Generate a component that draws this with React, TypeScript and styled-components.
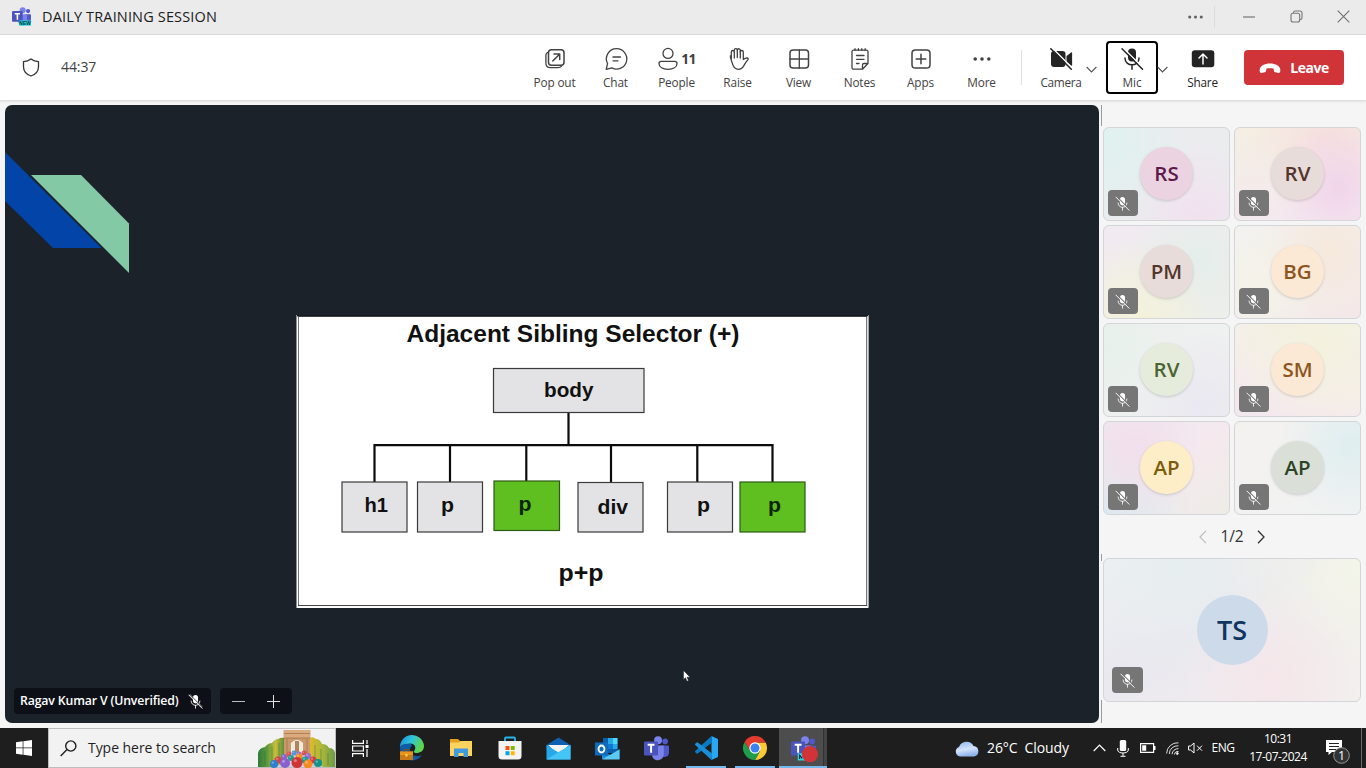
import React from 'react';
import styled, { createGlobalStyle } from 'styled-components';

const GlobalStyle = createGlobalStyle`
  * { box-sizing: border-box; }
  html, body { margin: 0; padding: 0; overflow: hidden; }
  body { font-family: "Open Sans", "Noto Sans", sans-serif; color: #242424; }
  svg { display: block; flex: none; overflow: visible; }
`;

const Window = styled.div`
  width: 1366px;
  height: 768px;
  display: flex;
  flex-direction: column;
  background: #f5f5f5;
`;

/* ---------- shared text ---------- */
const Label = styled.span<{ $size: number; $track?: number; $weight?: number; $color?: string }>`
  font-size: ${p => p.$size}px;
  letter-spacing: ${p => p.$track ?? 0}px;
  font-weight: ${p => p.$weight ?? 400};
  color: ${p => p.$color ?? 'inherit'};
  line-height: 1.2;
  white-space: pre;
`;

/* ---------- title bar ---------- */
const TitleBar = styled.header`
  height: 35px;
  flex: none;
  display: flex;
  align-items: center;
  padding: 0 0 1px 12px;
  background: #ebebeb;
  border-bottom: 1px solid #d9d9d9;
`;
const TitleText = styled(Label)`
  margin-left: 11px;
  flex: 1;
`;
const TitleDivider = styled.div`
  width: 1px;
  height: 22px;
  margin-right: 10px;
  background: #dcdcdc;
`;
const WindowControl = styled.div<{ $w: number }>`
  width: ${p => p.$w}px;
  display: flex;
  justify-content: center;
  color: #616161;
`;

/* ---------- meeting toolbar ---------- */
const Toolbar = styled.nav`
  height: 66px;
  flex: none;
  display: flex;
  align-items: center;
  padding: 0 22px 0 22px;
  background: #fff;
  border-bottom: 1px solid #dedede;
  box-shadow: 0 1px 2px rgba(0, 0, 0, 0.08);
  position: relative;
`;
const Timer = styled(Label)`
  margin-left: 21px;
  flex: 1;
`;
const Tool = styled.div<{ $w?: number; $focused?: boolean; $ml?: number }>`
  width: ${p => p.$w ?? 61}px;
  height: 53px;
  margin-left: ${p => p.$ml ?? 0}px;
  padding-top: ${p => (p.$focused ? 4 : 6)}px;
  display: flex;
  flex-direction: column;
  align-items: center;
  gap: 4px;
  border: ${p => (p.$focused ? '2px solid #000' : '0')};
  border-radius: 4px;
  color: #424242;
`;
const ToolIcon = styled.div`
  height: 24px;
  display: flex;
  align-items: center;
  gap: 2px;
`;
const ToolDivider = styled.div`
  width: 1px;
  height: 35px;
  margin-left: 9px;
  background: #e0e0e0;
`;
const Chevron = styled.div<{ $ml: number }>`
  width: 11px;
  margin-left: ${p => p.$ml}px;
  padding-top: 4px;
`;
const LeaveButton = styled.div`
  width: 100px;
  height: 35px;
  margin-left: 15px;
  padding-top: 1px;
  display: flex;
  align-items: center;
  justify-content: center;
  gap: 9px;
  border-radius: 4px;
  background: #d13438;
`;

/* ---------- meeting body ---------- */
const Body = styled.main`
  flex: 1;
  min-height: 0;
  display: flex;
  padding: 4px 5px 5px 5px;
`;
const Stage = styled.section`
  width: 1094px;
  height: 618px;
  position: relative;
  border-radius: 7px;
  overflow: hidden;
  background: #1b222a;
`;
const StageControls = styled.div`
  position: absolute;
  left: 9px;
  bottom: 9px;
  display: flex;
  gap: 9px;
`;
const StagePill = styled.div<{ $w: number }>`
  width: ${p => p.$w}px;
  height: 26px;
  display: flex;
  align-items: center;
  justify-content: space-between;
  border-radius: 4px;
  background: #0d1117;
  color: #fff;
  padding: 0 ${p => (p.$w > 100 ? '8px 0 6px' : '12px')};
`;
const Cursor = styled.div`
  position: absolute;
  left: 678px;
  top: 565px;
`;

/* ---------- participants ---------- */
const Side = styled.aside`
  width: 260px;
  margin-left: 2px;
  padding: 22px 0 0 2px;
  background:
    linear-gradient(#9b9b9b, #9b9b9b) 0 0 / 1px 21px no-repeat,
    linear-gradient(#9b9b9b, #9b9b9b) 0 449px / 1px 7px no-repeat,
    linear-gradient(#9b9b9b, #9b9b9b) 0 595px / 1px 25px no-repeat;
`;
const Grid = styled.div`
  display: grid;
  grid-template-columns: 127px 127px;
  grid-auto-rows: 94px;
  gap: 4px;
`;
const Tile = styled.div<{ $bg: string; $big?: boolean }>`
  height: ${p => (p.$big ? '144px' : 'auto')};
  position: relative;
  display: flex;
  align-items: center;
  justify-content: center;
  padding-bottom: 1px;
  border: 1px solid #d3d5d8;
  border-radius: 6px;
  background: ${p => p.$bg};
`;
const Avatar = styled.div<{ $bg: string; $fg: string; $big?: boolean }>`
  width: ${p => (p.$big ? 71 : 53)}px;
  height: ${p => (p.$big ? 70 : 53)}px;
  padding-bottom: 1px;
  display: flex;
  align-items: center;
  justify-content: center;
  border-radius: 50%;
  background: ${p => p.$bg};
  color: ${p => p.$fg};
  font-size: ${p => (p.$big ? 27 : 20.5)}px;
  font-weight: 600;
  box-shadow: ${p => (p.$big ? 'none' : '0 1px 3px rgba(0,0,0,0.16)')};
`;
const MuteBadge = styled.div<{ $big?: boolean }>`
  position: absolute;
  left: ${p => (p.$big ? 8 : 4)}px;
  bottom: ${p => (p.$big ? 8 : 4)}px;
  width: ${p => (p.$big ? 31 : 30)}px;
  height: 26px;
  display: flex;
  align-items: center;
  justify-content: center;
  padding-right: 1px;
  border-radius: 4px;
  background: #777676;
  color: #fff;
`;
const Pager = styled.div`
  height: 43px;
  display: flex;
  align-items: center;
  justify-content: center;
  gap: 14px;
`;

/* ---------- taskbar ---------- */
const Taskbar = styled.footer`
  height: 40px;
  flex: none;
  display: flex;
  background: #1e1e1e;
  color: #fff;
`;
const StartButton = styled.div`
  width: 48px;
  display: flex;
  align-items: center;
  justify-content: center;
`;
const SearchBox = styled.div`
  width: 288px;
  display: flex;
  align-items: center;
  border: 1px solid #bdbdbd;
  background: #f2f2f2;
  color: #1f1f1f;
  padding-left: 11px;
`;
const SearchText = styled(Label)`
  margin-left: 11px;
  padding-top: 1px;
  flex: 1;
`;
const TaskItem = styled.div<{ $active?: boolean; $open?: boolean }>`
  width: ${p => (p.$active ? 48 : 49)}px;
  display: flex;
  align-items: center;
  justify-content: center;
  background:
    linear-gradient(#76b9ed, #76b9ed) center bottom / ${p => (p.$active ? '48px 2px' : p.$open ? '40px 2px' : '0 0')} no-repeat
    ${p => (p.$active ? ', linear-gradient(90deg, #4d4d4d 44px, #323232 44px, #323232 45px, #444 45px)' : '')};
`;
const PinnedApps = styled.div`
  display: flex;
  margin-left: 2px;
`;
const Tray = styled.div`
  margin-left: auto;
  display: flex;
  align-items: center;
`;
const TrayItem = styled.div<{ $w: number }>`
  width: ${p => p.$w}px;
  display: flex;
  align-items: center;
  justify-content: center;
`;
const Notifications = styled(TrayItem)`
  padding: 6px 3px 0 0;
`;
const Clock = styled.div`
  width: 76px;
  display: flex;
  flex-direction: column;
  align-items: center;
  gap: 3px;
`;
const Weather = styled.div`
  width: 133px;
  display: flex;
  align-items: center;
  gap: 8px;
`;
const DesktopEdge = styled.div`
  width: 5px;
  height: 40px;
  border-left: 1px solid #6a6a6a;
`;

/* ---------- icons ---------- */
const stroke = { fill: 'none', stroke: 'currentColor', strokeWidth: 1.3, strokeLinecap: 'round', strokeLinejoin: 'round' } as const;

const TeamsMark = ({ size, badge }: { size: number; badge?: 'new' | 'dot' }) => (
  <svg width={size} height={size} viewBox="0 0 24 24">
    <circle cx="20.3" cy="5.2" r="2.7" fill="#5059c9" />
    <path d="M16 9h7a1 1 0 0 1 1 1v6a4.3 4.3 0 0 1-8 2z" fill="#5059c9" />
    <circle cx="13.5" cy="4.1" r="3.8" fill="#7b83eb" />
    <path d="M8 9h11v8.500a5.800 5.800 0 0 1-11 2.500z" fill="#7b83eb" />
    <rect x="0" y="5.200" width="13.500" height="13.500" rx="1.300" fill="#4b53bc" />
    <path d="M3.500 8.500h6.600M6.800 8.500v7.500" stroke="#fff" strokeWidth="1.900" fill="none" />
    {badge === 'new' && (
      <g>
        <rect x="9" y="17" width="15" height="6.500" fill="#21d3dc" />
        <text x="16.500" y="22.500" textAnchor="middle" fontFamily="Liberation Sans" fontWeight="700" fontSize="6.200" fill="#053b3f">NEW</text>
      </g>
    )}
    {badge === 'dot' && (
      <g>
        <path d="M6.500 16.500h7v7h-7z" fill="#25d7e0" />
        <path d="M8.300 22v-3.500l2.500 3" stroke="#113" fill="none" />
        <circle cx="18.200" cy="17.500" r="7.800" fill="#d13438" />
      </g>
    )}
  </svg>
);

const MicOff = ({ size }: { size: number }) => (
  <svg width={size} height={size} viewBox="0 0 16 16">
    <rect x="5.300" y="1" width="5.400" height="9" rx="2.700" fill="currentColor" />
    <path d="M3.300 7.500c0 6.200 9.400 6.200 9.400 0M8 12.200v2.900" fill="none" stroke="currentColor" strokeWidth="0.900" strokeLinecap="round" />
    <path d="M1.800 0.500l13.500 13.500" stroke="#777676" strokeWidth="1.100" />
    <path d="M1 1.200l14 14" stroke="currentColor" strokeWidth="1" strokeLinecap="round" />
  </svg>
);

const ToolMicOff = () => (
  <svg width="24" height="24" viewBox="0 0 24 24" color="#242424">
    <rect x="8" y="1.500" width="8" height="13" rx="4" fill="currentColor" />
    <path d="M5 11c0 9 14 9 14 0M12 17.800v4.400" {...stroke} strokeWidth="1.500" />
    <path d="M3 0.800l21 21" stroke="#fff" strokeWidth="1.500" />
    <path d="M2 1.800l20.500 20.500" stroke="currentColor" strokeWidth="1.500" strokeLinecap="round" />
  </svg>
);

const CameraOff = () => (
  <svg width="24" height="24" viewBox="0 0 24 24" color="#242424">
    <rect x="2" y="4" width="14.500" height="16" rx="3" fill="currentColor" />
    <path d="M17.500 9l4.600-3.500a.7.7 0 0 1 1 .6v11.800a.7.7 0 0 1-1 .6l-4.600-3.500z" fill="currentColor" />
    <path d="M3 0.800l21 21" stroke="#fff" strokeWidth="1.500" />
    <path d="M1.800 1.800l20.500 20.500" stroke="currentColor" strokeWidth="1.500" strokeLinecap="round" />
  </svg>
);

const PopOutIcon = () => (
  <svg width="24" height="24" viewBox="0 0 24 24" {...stroke}>
    <rect x="5.500" y="2.800" width="15.500" height="15.500" rx="3" strokeWidth="1.500" />
    <path d="M4.500 5.500C3 6.200 2.900 7 2.900 8.500v7.500c0 3 1.800 4.600 4.500 4.600h7.600c1.800 0 2.800-.5 3.600-1.500" />
    <path d="M9.800 14L16.500 7.200M11 7h5.700v5.600" strokeWidth="1.500" />
  </svg>
);
const ChatIcon = () => (
  <svg width="24" height="24" viewBox="0 0 24 24" {...stroke}>
    <path d="M12.500 1.700a10.200 10.200 0 1 1-4.700 19.200L2.200 22.300l1.400-5.600A10.200 10.200 0 0 1 12.500 1.700z" />
    <path d="M9 10h7.500M9 13.800h5" />
  </svg>
);
const PeopleIcon = () => (
  <svg width="22" height="24" viewBox="0 0 22 24" {...stroke}>
    <circle cx="11" cy="6.400" r="5" />
    <path d="M4.200 14.300h13.600a2.200 2.200 0 0 1 2.200 2.200c0 3.700-3.800 5.800-9 5.800s-9-2.100-9-5.800a2.200 2.200 0 0 1 2.200-2.200z" />
  </svg>
);
const RaiseIcon = () => (
  <svg width="24" height="24" viewBox="0 0 24 24" {...stroke}>
    <path d="M6 12.800V5.200a1.500 1.500 0 0 1 3 0a1.500 1.500 0 0 1 0-1.600 1.500 1.500 0 0 1 3-.4 1.500 1.500 0 0 1 3 .6v1.400a1.500 1.500 0 0 1 3 0v7.500c1.400-1 2.200-1.500 3.600-1.500 1.300 0 1.700 1 .9 1.900-2 1.700-2.600 3.600-3.900 5.700-1.400 2.500-3 3.700-5.400 3.700-3.600 0-5.300-2-6.200-6.100C6.500 14.500 5 12 5 9" transform="translate(-.7 -.2)" />
    <path d="M8.300 5v6M11.300 3v7.500M14.300 4.500v6.500" />
  </svg>
);
const ViewIcon = () => (
  <svg width="24" height="24" viewBox="0 0 24 24" {...stroke}>
    <rect x="3" y="3" width="18.500" height="18" rx="3" strokeWidth="1.500" />
    <path d="M12.300 3v18M3 12h18.500" />
  </svg>
);
const NotesIcon = () => (
  <svg width="24" height="24" viewBox="0 0 24 24" {...stroke}>
    <path d="M5.500 3.200h13a1.500 1.500 0 0 1 1.500 1.500v11.800l-5.500 5.700h-9A1.500 1.500 0 0 1 4 20.700v-16A1.500 1.500 0 0 1 5.500 3.200zM14.500 22v-4a1.500 1.500 0 0 1 1.500-1.500h4" />
    <path d="M7 1.700v1.500M10.400 1.700v1.500M13.800 1.700v1.500M17.100 1.700v1.500M8.500 8.500H16M8.500 12.300H16M8.500 16.500h2.500" />
  </svg>
);
const AppsIcon = () => (
  <svg width="24" height="24" viewBox="0 0 24 24" {...stroke}>
    <rect x="3" y="3" width="18" height="18" rx="3.300" strokeWidth="1.500" />
    <path d="M12 7.200v9.600M7.200 12h9.600" strokeWidth="1.500" />
  </svg>
);
const Dots = ({ w }: { w: number }) => (
  <svg width={w} height="6" viewBox="0 0 20 6" fill="currentColor">
    <circle cx="3.200" cy="3" r="1.800" /><circle cx="10" cy="3" r="1.800" /><circle cx="16.800" cy="3" r="1.800" />
  </svg>
);
const ShareIcon = () => (
  <svg width="24" height="24" viewBox="0 0 24 24">
    <rect x="0.800" y="3.300" width="22.500" height="17" rx="3" fill="#242424" />
    <path d="M12 17V7.500M8 11l4-4 4 4" fill="none" stroke="#fff" strokeWidth="1.500" strokeLinecap="round" strokeLinejoin="round" />
  </svg>
);
const DownChevron = () => (
  <svg width="11" height="8" viewBox="0 0 11 8"><path d="M.6 1l4.900 5L10.400 1" fill="none" stroke="#555" strokeWidth="1.100" /></svg>
);
const HangUp = () => (
  <svg width="22" height="11" viewBox="0 0 22 11">
    <path d="M11 .6c5.500 0 9.800 2.300 10.300 5.800.2 1.800-.3 3.600-1.700 3.500l-3.300-.6c-1-.2-1.400-1-1.500-2l-.2-1.700C12.500 5 9.500 5 7.400 5.600l-.2 1.700c-.1 1-.5 1.800-1.500 2l-3.300.6C1 10 .5 8.200.7 6.400 1.200 2.900 5.500.6 11 .6z" fill="#fff" />
  </svg>
);

/* ---------- slide ---------- */
type Node = { x: number; y: number; w: number; h: number; label: string; tx: number; ty: number; tw: number; hit?: boolean };
const nodes: Node[] = [
  { x: 493.5, y: 368.5, w: 150.5, h: 44, label: 'body', tx: 544, ty: 396.5, tw: 49.5 },
  { x: 342, y: 482, w: 65, h: 50, label: 'h1', tx: 364.5, ty: 511.5, tw: 23.5 },
  { x: 417.5, y: 482, w: 65, h: 50, label: 'p', tx: 441, ty: 511.5, tw: 13 },
  { x: 494, y: 481, w: 65.5, h: 49.5, label: 'p', tx: 518.5, ty: 510.5, tw: 13, hit: true },
  { x: 578, y: 482.5, w: 65, h: 49.5, label: 'div', tx: 597.5, ty: 513.5, tw: 30.5 },
  { x: 667.5, y: 482, w: 65, h: 50, label: 'p', tx: 697, ty: 511.5, tw: 13 },
  { x: 740, y: 482, w: 65, h: 50, label: 'p', tx: 768, ty: 511.5, tw: 13, hit: true },
];

const Slide = () => (
  <svg width="1094" height="618" viewBox="5 105 1094 618" fontFamily='"Liberation Sans", Arial, sans-serif' fontWeight="700">
    <path d="M5 152L101.500 248H53L5 201z" fill="#0344a8" />
    <path d="M31 175h50l48 48.500v49.500z" fill="#84c9a6" />
    <rect x="296.500" y="315" width="572" height="293" fill="#fff" />
    <path d="M297 315.500h571" stroke="#14191f" />
    <path d="M297.500 316.500h570" stroke="#3e4347" />
    <path d="M298.500 317v288" stroke="#777" />
    <path d="M298 605.500h569" stroke="#444" />
    <path d="M866.500 317v288" stroke="#777" />
    <path d="M868 316v291" stroke="#b9bcbc" />
    <g fill="none" stroke="#0b0b0b" strokeWidth="2.200">
      <path d="M568.500 413v32M374.500 482V445.200H772.500V482M450 445v37M526.300 445v36M611 445v37M697.300 445v37" />
    </g>
    {nodes.map((n, i) => (
      <g key={i}>
        <rect x={n.x} y={n.y} width={n.w} height={n.h} fill={n.hit ? '#5fbf21' : '#e3e3e5'} stroke={n.hit ? '#2c5a14' : '#3a3a3a'} strokeWidth="1.200" />
        <text x={n.tx} y={n.ty} fontSize="21" textLength={n.tw} lengthAdjust="spacingAndGlyphs" fill={n.hit ? '#0b2504' : '#111'}>{n.label}</text>
      </g>
    ))}
    <text x="406.500" y="342" fontSize="24" textLength="333" lengthAdjust="spacingAndGlyphs" fill="#111">Adjacent Sibling Selector (+)</text>
    <text x="558.500" y="580.500" fontSize="24" textLength="45" lengthAdjust="spacingAndGlyphs" fill="#111">p+p</text>
  </svg>
);

/* ---------- taskbar art ---------- */
const balls: [number, number, number, string][] = [
  [31, 25, 2.5, '#e05252'], [36, 24, 2.5, '#4c97d8'], [41, 25, 2.5, '#9a6bd0'], [46, 24, 2.5, '#d95050'],
  [26, 28, 3, '#8f63c9'], [33, 29, 3, '#1f9b94'], [41, 28, 3.5, '#f58a1f'], [50, 27, 3, '#9a6bd0'],
  [20, 31, 3.5, '#d44545'], [47, 31, 3.5, '#1f9b94'], [55, 31, 3.5, '#cf4141'],
  [16, 35, 4, '#2f7fd1'], [27, 34, 5, '#8a60cf'], [39, 33.5, 5.5, '#cf3434'], [50, 35, 4.5, '#f58a1f'], [60, 34, 4, '#149189'],
];
const SearchArt = () => (
  <svg width="77" height="38" viewBox="0 0 77 38">
    <defs>
      <linearGradient id="tree" x1="0" x2="1"><stop offset="0" stopColor="#2f7a3c" /><stop offset=".35" stopColor="#5f9a3c" /><stop offset=".65" stopColor="#c9bd3a" /><stop offset="1" stopColor="#4b8a3a" /></linearGradient>
      <linearGradient id="tree2" x1="1" x2="0"><stop offset="0" stopColor="#6b9a4a" /><stop offset=".5" stopColor="#aab83a" /><stop offset="1" stopColor="#e2b92e" /></linearGradient>
    </defs>
    <path d="M0 38V24q1-5 7-6 3-4 7-4 3-4 6-4 3-2 7-1v29z" fill="url(#tree)" />
    <path d="M77 38V24q-1-5-6-5-2-4-7-4-2-5-6-5-3-3-7-1v29z" fill="url(#tree2)" />
    <path d="M7 22v14M14 18v18M21 14v16M57 16v14M63 20v16M70 24v12" stroke="#2d6a35" strokeWidth="1.400" opacity=".3" />
    <path d="M26 6h26v23h-7V14q-6-6-12 0v15h-7z" fill="#c9986b" />
    <path d="M33.500 14q5.500-6 11 0v9h-11z" fill="#efe8dd" />
    <path d="M37 12h4v12h-4z" fill="#b0835c" />
    <path d="M25.500 1h27v8h-27z" fill="#d9ab7e" />
    <path d="M26 4.500h26M26 9h26M29 10v18M49 10v18" stroke="#a4744b" strokeWidth=".8" />
    <path d="M18 38l17-13h12l18 13z" fill="#cfcde9" />
    {balls.map(([cx, cy, r, c], i) => (
      <g key={i}>
        <circle cx={cx} cy={cy} r={r} fill={c} />
        <circle cx={cx - r * 0.3} cy={cy - r * 0.35} r={r * 0.3} fill="#fff" opacity=".35" />
      </g>
    ))}
  </svg>
);
const TaskView = () => (
  <svg width="17" height="17" viewBox="0 0 17 17" fill="none" stroke="#fff" strokeWidth="1.200">
    <path d="M.6 0v3.400h10.800V0M.6 17v-3.400h10.800V17M.6 6h10.800v5H.6zM15 0v4M15 9v8" />
    <path d="M13.500 5h3v3h-3z" fill="#fff" stroke="none" />
  </svg>
);
const Edge = () => (
  <svg width="26" height="26" viewBox="0 0 26 26">
    <defs><linearGradient id="edge" x1="0" y1="0" x2="1" y2=".4"><stop offset="0" stopColor="#1689d8" /><stop offset=".5" stopColor="#2fc3dd" /><stop offset="1" stopColor="#5fd748" /></linearGradient></defs>
    <path d="M1 13a12 12 0 0 0 22 7c-6 3-12 0-12-5 0-3 2-4 2-5C8 6 1 9 1 13z" fill="#0f5ca8" />
    <path d="M1 13A12 12 0 0 1 25 11c0 5-4 7-7.500 7-2.500 0-3.500-1-2-2.500 2.500-4-1-7.500-5-7C6 9 1 9 1 13z" fill="url(#edge)" />
    <path d="M1 16.500h13v8.500H1z" fill="#c97a16" />
    <path d="M1 16.500h13v3.500H1z" fill="#e8951c" />
    <path d="M5 16.500v-1.800h5v1.800" fill="none" stroke="#8c4d0a" />
    <path d="M6.500 19h2v2.500h-2z" fill="#ffd54a" />
  </svg>
);
const Explorer = () => (
  <svg width="22" height="20" viewBox="0 0 22 20">
    <path d="M0 1h8l2 2h12v15H0z" fill="#e6a11b" />
    <path d="M0 4.500h9.500L11 3h11v15H0z" fill="#ffd45e" />
    <path d="M4 19V10.500h14V19h-4.500v-4h-5v4z" fill="#3f9be0" />
  </svg>
);
const Store = () => (
  <svg width="24" height="24" viewBox="0 0 24 24">
    <path d="M7 6V2.500a1 1 0 0 1 1-1h8a1 1 0 0 1 1 1V6" fill="none" stroke="#27b6ea" strokeWidth="1.800" />
    <path d="M.5 5h23v15a3.500 3.500 0 0 1-3.500 3.500H4A3.500 3.500 0 0 1 .5 20z" fill="#f4f4f4" />
    <path d="M7.500 10h4v4h-4z" fill="#f25022" /><path d="M12.700 10h4v4h-4z" fill="#7fba00" />
    <path d="M7.500 15.200h4v4h-4z" fill="#00a4ef" /><path d="M12.700 15.200h4v4h-4z" fill="#ffb900" />
  </svg>
);
const Mail = () => (
  <svg width="25" height="23" viewBox="0 0 25 23">
    <path d="M.5 8L12.500.5 24.500 8v4H.5z" fill="#0f5fb0" />
    <path d="M2 8h21L12.500 18z" fill="#f3f3f3" />
    <path d="M.5 8l12 7.500 12-7.500v14.500H.5z" fill="#28a8ea" />
    <path d="M.5 22.500l13-8 11-6.500v14.500z" fill="#45c5f5" />
  </svg>
);
const Outlook = () => (
  <svg width="25" height="23" viewBox="0 0 25 23">
    <path d="M8 1h14.500v15H8z" fill="#0a5fae" /><path d="M13 1h5v6h-5z" fill="#28a8ea" /><path d="M18 1h4.500v6H18z" fill="#50d9ff" /><path d="M13 7h5v5h-5z" fill="#0f78d4" /><path d="M18 7h4.500v5H18z" fill="#28a8ea" />
    <path d="M7 14l8.500 4 9-6v10H7z" fill="#1b8ed6" /><path d="M7 22.500l17.500-10v10z" fill="#5cc9f3" />
    <path d="M0 5.500h13v13H0z" fill="#0f6cbd" />
    <ellipse cx="6.500" cy="12" rx="3" ry="3.500" fill="none" stroke="#fff" strokeWidth="1.800" />
  </svg>
);
const VsCode = () => (
  <svg width="24" height="24" viewBox="0 0 24 24">
    <path d="M17.500 0L24 3v18l-6.500 3z" fill="#2aa6f2" />
    <path d="M17.500 0L1.200 15a.8.8 0 0 0 0 1.200l1.400 1.200a1 1 0 0 0 1.200 0L18 6.500z" fill="#0a79c4" />
    <path d="M17.500 24L1.200 9a.8.8 0 0 1 0-1.200l1.400-1.200a1 1 0 0 1 1.200 0L18 17.500z" fill="#1a8fd8" />
  </svg>
);
const Chrome = () => (
  <svg width="24" height="24" viewBox="0 0 24 24">
    <path d="M12 6.500h10.700A12 12 0 0 1 12 24l5-9z" fill="#fcc934" />
    <path d="M1.600 6A12 12 0 0 0 12 24l5-9-5 2.500-5-3z" fill="#1e9e4a" />
    <path d="M1.600 6a12 12 0 0 1 21 .5H12l-5 8z" fill="#e33b2e" />
    <circle cx="12" cy="12" r="5.700" fill="#fff" /><circle cx="12" cy="12" r="4.500" fill="#3b82f0" />
  </svg>
);
const Cloud = () => (
  <svg width="24" height="17" viewBox="0 0 24 17">
    <defs><linearGradient id="cloud" x1="0" y1="0" x2=".3" y2="1"><stop offset="0" stopColor="#8bb6f0" /><stop offset=".6" stopColor="#d3e3fb" /><stop offset="1" stopColor="#8fb5ee" /></linearGradient></defs>
    <path d="M5 16.500a5 5 0 0 1-1-9.600A8 8 0 0 1 18.500 6 5.300 5.300 0 0 1 19 16.500z" fill="url(#cloud)" />
  </svg>
);

const people = [
  { id: 'RS', bg: '#ebd3e2', fg: '#5c1a48', tile: 'radial-gradient(circle at 0 15%, #dff2f0, transparent 60%), radial-gradient(circle at 75% 100%, #f2e1f0, transparent 60%), #ebecee' },
  { id: 'RV', bg: '#e7dcd9', fg: '#54352b', tile: 'radial-gradient(circle at 82% 65%, #f1d5eb, transparent 55%), radial-gradient(circle at 75% 10%, #f6dfdd, transparent 60%), linear-gradient(170deg, #f4eee2, #f4e9f1)' },
  { id: 'PM', bg: '#e7dcd9', fg: '#54352b', tile: 'radial-gradient(circle at 25% 100%, #f4f2d9, transparent 60%), radial-gradient(circle at 75% 35%, #e4eeea, transparent 65%), linear-gradient(150deg, #f2eaf2, #eeefe9)' },
  { id: 'BG', bg: '#fce9d5', fg: '#8c5520', tile: 'radial-gradient(circle at 75% 25%, #f6e9dc, transparent 60%), radial-gradient(circle at 20% 60%, #f4f3e8, transparent 60%), linear-gradient(150deg, #f2f2f2, #f4e8e8)' },
  { id: 'RV', bg: '#e5ecdb', fg: '#4a6432', tile: 'radial-gradient(circle at 0 25%, #e7f1eb, transparent 60%), radial-gradient(circle at 80% 90%, #eae8f1, transparent 60%), #eff0f0' },
  { id: 'SM', bg: '#fce9d5', fg: '#8c5520', tile: 'radial-gradient(circle at 65% 20%, #f4f1df, transparent 75%), linear-gradient(20deg, #f3e7ef, #f5eee9 45%, #f2f2e4)' },
  { id: 'AP', bg: '#fdeec8', fg: '#7d5b0c', tile: 'radial-gradient(circle at 25% 30%, #f1dfec, transparent 60%), radial-gradient(circle at 5% 100%, #dce9ef, transparent 55%), linear-gradient(150deg, #f1e8f1, #f5e9ee 50%, #eeece7)' },
  { id: 'AP', bg: '#dae0d7', fg: '#2c4426', tile: 'radial-gradient(circle at 92% 25%, #dfeef0, transparent 55%), linear-gradient(150deg, #f4f2ef, #f0f2f2)' },
];

const tools: [string, React.ReactNode][] = [
  ['Pop out', <PopOutIcon />], ['Chat', <ChatIcon />], ['People', <PeopleIcon />], ['Raise', <RaiseIcon />],
  ['View', <ViewIcon />], ['Notes', <NotesIcon />], ['Apps', <AppsIcon />], ['More', <Dots w={20} />],
];

export default function App() {
  return (
    <Window>
      <GlobalStyle />
      <TitleBar>
        <TeamsMark size={19} badge="new" />
        <TitleText $size={14.5} $track={0.15} $color="#1c1c1c">DAILY TRAINING SESSION</TitleText>
        <WindowControl $w={37}><Dots w={17} /></WindowControl>
        <TitleDivider />
        <WindowControl $w={47}><svg width="12" height="2"><path d="M0 1h12" stroke="#777" strokeWidth="1.200" /></svg></WindowControl>
        <WindowControl $w={48}>
          <svg width="13" height="13" viewBox="0 0 13 13" fill="none" stroke="#777" strokeWidth="1.100"><rect x="1" y="3.300" width="8.700" height="8.700" rx="2" /><path d="M3.500 3V2.600A1.600 1.600 0 0 1 5.100 1h4.900a2 2 0 0 1 2 2v4.900a1.600 1.600 0 0 1-1.600 1.600H10" /></svg>
        </WindowControl>
        <WindowControl $w={46}><svg width="13" height="13" viewBox="0 0 13 13"><path d="M.7.7l11.600 11.600M12.300.7L.7 12.300" stroke="#707070" strokeWidth="1.100" /></svg></WindowControl>
      </TitleBar>

      <Toolbar>
        <svg width="18" height="19" viewBox="0 0 18 19" color="#333" {...stroke}><path d="M9 1c2 1.600 4.500 2.500 7.500 2.600v5.200c0 4.300-2.600 7.500-7.500 9.200-4.900-1.700-7.500-4.900-7.500-9.200V3.600C4.500 3.500 7 2.600 9 1z" /></svg>
        <Timer $size={14} $track={-0.1} $color="#424242">44:37</Timer>
        {tools.map(([name, icon]) => (
          <Tool key={name}>
            <ToolIcon>
              {icon}
              {name === 'People' && <Label $size={13.8} $weight={700} $track={-0.6}>11</Label>}
            </ToolIcon>
            <Label $size={11.8} $track={-0.15}>{name}</Label>
          </Tool>
        ))}
        <ToolDivider />
        <Tool $w={52} $ml={13}><ToolIcon><CameraOff /></ToolIcon><Label $size={11.8} $track={-0.3}>Camera</Label></Tool>
        <Chevron $ml={-1}><DownChevron /></Chevron>
        <Tool $w={52} $ml={9} $focused><ToolIcon><ToolMicOff /></ToolIcon><Label $size={11.8} $track={-0.1}>Mic</Label></Tool>
        <Chevron $ml={-1}><DownChevron /></Chevron>
        <Tool $w={53} $ml={8}><ToolIcon><ShareIcon /></ToolIcon><Label $size={11.8} $track={-0.2} $color="#242424">Share</Label></Tool>
        <LeaveButton><HangUp /><Label $size={14} $weight={700} $track={-0.45} $color="#fff">Leave</Label></LeaveButton>
      </Toolbar>

      <Body>
        <Stage>
          <Slide />
          <Cursor>
            <svg width="8" height="12" viewBox="0 0 8 12"><path d="M.5.5v9l2-1.800 1.500 3.600 1.500-.7L4 7.200h3z" fill="#fff" stroke="#222" strokeWidth=".5" /></svg>
          </Cursor>
          <StageControls>
            <StagePill $w={197}><Label $size={12.3} $weight={600} $track={-0.15}>Ragav Kumar V (Unverified)</Label><MicOff size={15} /></StagePill>
            <StagePill $w={72}>
              <svg width="13" height="13"><path d="M0 6.500h13" stroke="#b9bbbd" /></svg>
              <svg width="13" height="13"><path d="M0 6.500h13M6.500 0v13" stroke="#e0e0e0" /></svg>
            </StagePill>
          </StageControls>
        </Stage>

        <Side>
          <Grid>
            {people.map((p, i) => (
              <Tile key={i} $bg={p.tile}>
                <Avatar $bg={p.bg} $fg={p.fg}>{p.id}</Avatar>
                <MuteBadge><MicOff size={15} /></MuteBadge>
              </Tile>
            ))}
          </Grid>
          <Pager>
            <svg width="8" height="14" viewBox="0 0 8 14"><path d="M7 .8L1 7l6 6.200" fill="none" stroke="#bdbdbd" strokeWidth="1.200" /></svg>
            <Label $size={15.5} $track={-0.2} $color="#333">1/2</Label>
            <svg width="8" height="14" viewBox="0 0 8 14"><path d="M1 .8L7 7l-6 6.200" fill="none" stroke="#333" strokeWidth="1.300" /></svg>
          </Pager>
          <Tile $big $bg="radial-gradient(circle at 65% 85%, #f5e6ea, transparent 45%), radial-gradient(circle at 100% 10%, #f4f5e9, transparent 50%), radial-gradient(circle at 30% 5%, #e7eeef, transparent 50%), linear-gradient(150deg, #eef1f4, #e9e8ef 40%, #f3efef)">
            <Avatar $big $bg="#cddaea" $fg="#10365f">TS</Avatar>
            <MuteBadge $big><MicOff size={15} /></MuteBadge>
          </Tile>
        </Side>
      </Body>

      <Taskbar>
        <StartButton>
          <svg width="16" height="16" viewBox="0 0 16 16" fill="#fff"><path d="M0 2.200l6.700-.9v6.300H0zM7.400 1.200L16 0v7.600H7.400zM0 8.300h6.700v6.400L0 13.800zM7.400 8.300H16V16l-8.600-1.200z" /></svg>
        </StartButton>
        <SearchBox>
          <svg width="17" height="17" viewBox="0 0 17 17" fill="none" stroke="#1f1f1f" strokeWidth="1.400"><circle cx="10.800" cy="6" r="5.100" /><path d="M7 9.600L.7 16" /></svg>
          <SearchText $size={14} $track={-0.05}>Type here to search</SearchText>
          <SearchArt />
        </SearchBox>
        <TaskItem><TaskView /></TaskItem>
        <PinnedApps>
          <TaskItem><Edge /></TaskItem>
          <TaskItem><Explorer /></TaskItem>
          <TaskItem><Store /></TaskItem>
          <TaskItem><Mail /></TaskItem>
          <TaskItem><Outlook /></TaskItem>
          <TaskItem><TeamsMark size={25} /></TaskItem>
          <TaskItem $open><VsCode /></TaskItem>
          <TaskItem $open><Chrome /></TaskItem>
          <TaskItem $active><TeamsMark size={25} badge="dot" /></TaskItem>
        </PinnedApps>
        <Tray>
          <Weather><Cloud /><Label $size={14} $track={-0.1}>{'26°C  Cloudy'}</Label></Weather>
          <TrayItem $w={22}><svg width="13" height="8" viewBox="0 0 13 8"><path d="M.7 7l5.800-5.800L12.300 7" fill="none" stroke="#fff" strokeWidth="1.200" /></svg></TrayItem>
          <TrayItem $w={25}>
            <svg width="12" height="17" viewBox="0 0 12 17"><rect x="2.800" y="0" width="6.400" height="11" rx="1.500" fill="#fff" /><path d="M.7 8v2c0 4 10.600 4 10.600 0V8M6 13v3M3.500 16.300h5" fill="none" stroke="#fff" /></svg>
          </TrayItem>
          <TrayItem $w={25}>
            <svg width="16" height="10" viewBox="0 0 16 10"><path d="M.6.600h13v8.800H.6z" fill="none" stroke="#fff" strokeWidth="1.200" /><path d="M2.200 2.200h4v5.600h-4zM14 3h1.500v4H14z" fill="#fff" /></svg>
          </TrayItem>
          <TrayItem $w={24}>
            <svg width="13" height="13" viewBox="0 0 13 13" fill="none" stroke="#ddd"><path d="M.6 11.500A11 11 0 0 1 12.500.8M3.300 12A8.300 8.300 0 0 1 12.500 3.800M6 12.300a6 6 0 0 1 6.500-5.600" /><path d="M8.500 12.500a3.500 3.500 0 0 1 4-3" /><circle cx="11.300" cy="11.500" r="1" fill="#fff" /></svg>
          </TrayItem>
          <TrayItem $w={22}>
            <svg width="15" height="12" viewBox="0 0 15 12" fill="none" stroke="#fff"><path d="M.6 4h2L6 1v10L2.600 8h-2zM9 3.700l5 5M14 3.700l-5 5" /></svg>
          </TrayItem>
          <TrayItem $w={34}><Label $size={12} $track={-0.4}>ENG</Label></TrayItem>
          <Clock><Label $size={12} $track={-0.5}>10:31</Label><Label $size={12} $track={-0.5}>17-07-2024</Label></Clock>
          <Notifications $w={45}>
            <svg width="25" height="26" viewBox="0 0 25 26">
              <path d="M1 2h16v12H7l-3.500 3v-3H1z" fill="#fff" /><path d="M4 5.500h10M4 8.500h10M4 11.500h7" stroke="#222" />
              <circle cx="16.500" cy="17.500" r="7.800" fill="#333" stroke="#999" />
              <text x="16.500" y="22" textAnchor="middle" fontFamily="Open Sans" fontSize="12.500" fill="#fff">1</text>
            </svg>
          </Notifications>
          <DesktopEdge />
        </Tray>
      </Taskbar>
    </Window>
  );
}
